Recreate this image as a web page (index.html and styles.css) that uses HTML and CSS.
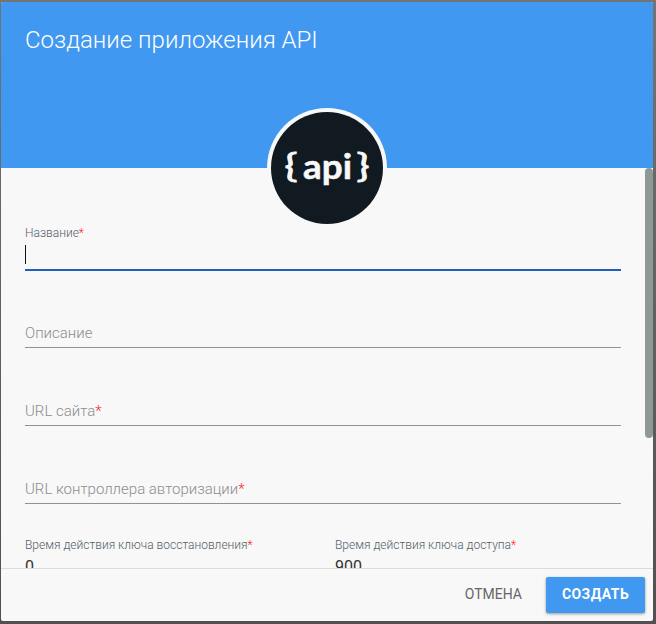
FILE: index.html
```html
<!DOCTYPE html>
<html lang="ru">
<head>
<meta charset="utf-8">
<title>Создание приложения API</title>
<link rel="stylesheet" href="styles.css">
</head>
<body>
<main class="dialog">
  <header class="header">
    <h1 class="title">Создание приложения API</h1>
    <svg class="logo" viewBox="0 0 120 120">
      <circle cx="60" cy="60" r="60" fill="#f8f8f8"/>
      <circle cx="60" cy="60" r="56" fill="#101a20"/>
      <g class="logo-text">
        <text class="brace" x="17.5" y="69" textLength="13" lengthAdjust="spacingAndGlyphs">{</text>
        <text class="word" x="36" y="71" textLength="49" lengthAdjust="spacingAndGlyphs">api</text>
        <text class="brace" x="89.5" y="69" textLength="13" lengthAdjust="spacingAndGlyphs">}</text>
      </g>
    </svg>
  </header>
  <form class="form">
    <div class="field focused">
      <label class="label">Название<span class="req">*</span></label>
      <div class="value"><span class="caret"></span></div>
    </div>
    <div class="field">
      <div class="placeholder">Описание</div>
    </div>
    <div class="field">
      <div class="placeholder">URL сайта<span class="req">*</span></div>
    </div>
    <div class="field">
      <div class="placeholder">URL контроллера авторизации<span class="req">*</span></div>
    </div>
    <div class="row">
      <div class="half">
        <label class="label">Время действия ключа восстановления<span class="req">*</span></label>
        <div class="value">0</div>
      </div>
      <div class="half">
        <label class="label">Время действия ключа доступа<span class="req">*</span></label>
        <div class="value">900</div>
      </div>
    </div>
    <span class="scrollbar"></span>
  </form>
  <footer class="footer">
    <button class="btn" type="button">ОТМЕНА</button>
    <button class="btn primary" type="button">СОЗДАТЬ</button>
  </footer>
</main>
</body>
</html>
```
FILE: styles.css
```css
* { box-sizing: border-box; }
body {
  margin: 0;
  height: 624px;
  padding: 2px 3px 3px 1px;
  overflow: hidden;
  background: linear-gradient(#747474, #666 35%, #5c5c5c 65%, #505050);
  font-family: Roboto, "Liberation Sans", sans-serif;
}
.dialog {
  height: 619px;
  display: flex;
  flex-direction: column;
  overflow: hidden;
  border-radius: 2px;
  background: #f8f8f8;
}
.header {
  position: relative;
  z-index: 1;
  flex: 0 0 166px;
  padding: 22px 24px;
  background: #4098f0;
}
.title {
  margin: 0;
  font-size: 24px;
  line-height: 32px;
  font-weight: 300;
  color: #fff;
}
.logo {
  position: absolute;
  left: 266px;
  top: 106px;
  width: 120px;
  height: 120px;
}
.logo-text { fill: #f8f8f8; stroke: #f8f8f8; }
.word { font: 700 34px Lato, sans-serif; stroke-width: .5px; }
.brace { font: 400 32px Lato, sans-serif; stroke-width: .9px; }
.form {
  position: relative;
  flex: 0 0 400px;
  padding: 57px 32px 0 24px;
  overflow: hidden;
}
.field {
  height: 78px;
  padding-top: 23px;
}
.field.focused { height: 77px; padding-top: 0; }
.label {
  display: block;
  font-size: 12px;
  line-height: 16px;
  font-weight: 300;
  color: #526169;
}
.req { color: #ff1f1f; }
.value {
  height: 30px;
  padding-top: 3px;
  font-size: 16px;
  line-height: 22px;
  color: #333;
}
.focused .value { border-bottom: 2px solid #225eb8; }
.caret {
  display: block;
  width: 1px;
  height: 19px;
  margin-top: 1px;
  background: #111;
}
.placeholder {
  height: 23px;
  border-bottom: 1px solid #929292;
  font-size: 15px;
  line-height: 17px;
  font-weight: 300;
  color: #8d8d8d;
}
.row {
  display: grid;
  grid-template-columns: 1fr 1fr;
  column-gap: 24px;
  padding-top: 1px;
}
.scrollbar {
  position: absolute;
  right: 0;
  top: 0;
  width: 8px;
  height: 270px;
  border-radius: 4px;
  background: #8e9995;
}
.footer {
  flex: 1;
  display: flex;
  justify-content: flex-end;
  align-items: flex-start;
  gap: 8px;
  padding: 8px 8px 0;
  border-top: 1px solid #dcdcdc;
}
.btn {
  height: 36px;
  padding: 0 16px 2px;
  border: 0;
  border-radius: 2px;
  background: none;
  font: 400 14px/34px Roboto, sans-serif;
  color: #666;
}
.primary {
  width: 99px;
  padding: 0 0 2px;
  background: #4098f0;
  color: #fff;
  font-weight: 700;
  letter-spacing: .45px;
  box-shadow: 0 1px 3px rgba(0, 0, 0, .4);
}
```
